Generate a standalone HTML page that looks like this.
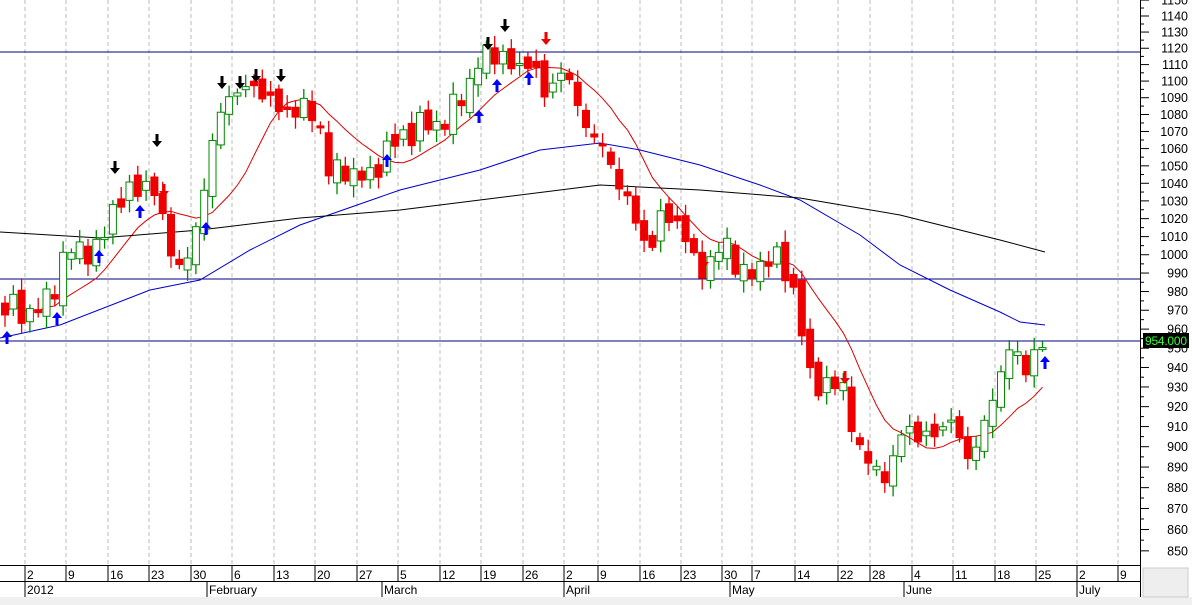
<!DOCTYPE html>
<html><head><meta charset="utf-8"><style>
body{margin:0;width:1192px;height:605px;overflow:hidden;background:#fff;font-family:"Liberation Sans",sans-serif}
svg{display:block}
</style></head><body>
<svg id="s" width="1192" height="605" xmlns="http://www.w3.org/2000/svg" font-family="Liberation Sans, sans-serif" font-size="12">
<rect x="0" y="0" width="1192" height="605" fill="#fff"/>
<g id="grid"></g>
<line x1="0" y1="52" x2="1140" y2="52" stroke="#000080" stroke-width="1"/>
<line x1="0" y1="279" x2="1140" y2="279" stroke="#000080" stroke-width="1"/>
<line x1="0" y1="341" x2="1140" y2="341" stroke="#000080" stroke-width="1"/>
<g id="lines"></g>
<g id="candles"></g>
<g id="arrows"></g>
<line x1="1140.5" y1="0" x2="1140.5" y2="565" stroke="#000"/>
<g id="axis"></g>
<rect x="1143" y="333" width="46" height="15" fill="#000"/>
<text x="1187" y="345" text-anchor="end" fill="#3f3" font-size="12" textLength="42">954.000</text>
<g id="dates"></g>
<rect x="0" y="597" width="1192" height="8" fill="#f0f0f0"/>
<rect x="1143" y="568" width="45" height="29" fill="#eee" stroke="#ccc"/>
</svg>
<script>
const NS="http://www.w3.org/2000/svg";
function el(p,t,a,txt){const e=document.createElementNS(NS,t);for(const k in a)e.setAttribute(k,a[k]);if(txt!=null)e.textContent=txt;document.getElementById(p).appendChild(e);return e;}
const Y=p=>16+1822*Math.log(1140/p);
for(let p=850;p<=1150;p+=5){const y=Y(p);el('axis','line',{x1:1140,y1:y,x2:p%10==0?1149:1144,y2:y,stroke:'#000'});
 if(p%10==0&&Math.abs(y-340)>6)el('axis','text',{x:1188,y:y+4.5,'text-anchor':'end',fill:'#000','font-size':'12.5'},p);}
const ticks=[[25,'2'],[66,'9'],[108,'16'],[149,'23'],[191,'30'],[232,'6'],[274,'13'],[315,'20'],[357,'27'],[398,'5'],[440,'12'],[481,'19'],[523,'26'],[564,'2'],[598,'9'],[640,'16'],[681,'23'],[722,'30'],[752,'7'],[795,'14'],[838,'22'],[870,'28'],[912,'4'],[953,'11'],[995,'18'],[1036,'25'],[1077,'2'],[1118,'9']];
ticks.forEach(([x,t])=>{el('grid','line',{x1:x,y1:0,x2:x,y2:565,stroke:'#bbb','stroke-dasharray':'4,3'});
 el('dates','line',{x1:x,y1:565,x2:x,y2:581,stroke:'#000'});el('dates','text',{x:x+2,y:579},t);});
el('dates','line',{x1:0,y1:565.5,x2:1140,y2:565.5,stroke:'#000'});
el('dates','line',{x1:0,y1:581.5,x2:1140,y2:581.5,stroke:'#000'});
[[25,'2012'],[207,'February'],[382,'March'],[564,'April'],[730,'May'],[904,'June'],[1077,'July']].forEach(([x,t])=>{el('dates','line',{x1:x,y1:581,x2:x,y2:597,stroke:'#000'});el('dates','text',{x:x+2,y:594},t);});
el('dates','line',{x1:1140.5,y1:565,x2:1140.5,y2:597,stroke:'#000'});
const K=[[5,305],[25,315],[50,300],[66,250],[100,250],[115,200],[140,190],[150,175],[160,215],[175,260],[185,270],[195,235],[210,150],[230,90],[245,90],[265,90],[280,115],[300,105],[320,125],[330,175],[350,170],[370,180],[385,150],[400,140],[420,125],[440,125],[460,100],[480,60],[500,50],[515,75],[530,55],[545,100],[560,65],[575,100],[595,140],[610,160],[630,210],[650,250],[665,210],[680,225],[695,265],[710,265],[725,240],[745,280],[770,255],[790,275],[800,320],[810,380],[830,385],[845,390],[860,455],[880,470],[890,480],[905,415],[920,445],[940,425],[955,425],[965,455],[980,445],[995,385],[1010,350],[1025,365],[1035,355],[1045,345]];
function interp(K,x){if(x<=K[0][0])return K[0][1];for(let i=1;i<K.length;i++)if(x<=K[i][0]){const a=K[i-1],b=K[i];return a[1]+(b[1]-a[1])*(x-a[0])/(b[0]-a[0]);}return K[K.length-1][1];}
const closes=[];let prev=310;
for(let x=5;x<=1046;x+=8.3){const c=interp(K,x)+9*Math.sin(x*0.37)+6*Math.sin(x*1.3);const o=prev+7*Math.sin(x*0.71+1);
 const top=Math.min(o,c)-3-9*Math.abs(Math.sin(x*0.53)),bot=Math.max(o,c)+3+9*Math.abs(Math.sin(x*0.91));
 const up=c<=o,col=up?'#080':'#e00';
 el('candles','line',{x1:x,y1:top,x2:x,y2:bot,stroke:col,'stroke-width':1.3});
 const t=Math.min(o,c),h=Math.max(2,Math.abs(o-c));
 el('candles','rect',{x:x-3.5,y:t,width:7,height:h,fill:up?'#fff':'#e00',stroke:col});
 closes.push([x,c]);prev=c;}
let pts=[];for(let i=0;i<closes.length;i++){let s=0,n=0;for(let j=Math.max(0,i-9);j<=i;j++){s+=closes[j][1];n++;}pts.push(closes[i][0]+','+(s/n));}
el('lines','polyline',{points:pts.join(' '),fill:'none',stroke:'#d00'});
const B=[[0,338],[60,325],[150,290],[200,280],[250,250],[300,225],[400,190],[480,170],[540,150],[600,143],[640,150],[700,165],[760,185],[800,200],[860,235],[900,265],[950,290],[1000,312],[1020,322],[1045,325]];
const D=[[0,232],[100,238],[200,230],[300,218],[400,210],[480,200],[600,185],[700,190],[800,198],[900,215],[1000,240],[1045,252]];
el('lines','polyline',{points:B.map(p=>p.join(',')).join(' '),fill:'none',stroke:'#00c'});
el('lines','polyline',{points:D.map(p=>p.join(',')).join(' '),fill:'none',stroke:'#000'});
function arrow(x,y,up,c){
 const d=up?`M${x},${y} l-5,6 h3.5 v7 h3 v-7 h3.5 z`:`M${x},${y} l-5,-6 h3.5 v-7 h3 v7 h3.5 z`;
 el('arrows','path',{d:d,fill:c});}
const AU=[[7,331],[57,312],[99,250],[140,205],[206,222],[387,154],[479,110],[497,79],[529,72],[1045,356]];
const AD=[[115,174],[157,147],[222,89],[240,89],[256,82],[281,82],[488,50],[505,32],[164,197],[546,45],[704,268],[845,384]];
AU.forEach(([x,y])=>arrow(x,y,true,'#00f'));
AD.forEach(([x,y],i)=>arrow(x,y,false,i>=8?'#e00':'#000'));
</script>
</body></html>
